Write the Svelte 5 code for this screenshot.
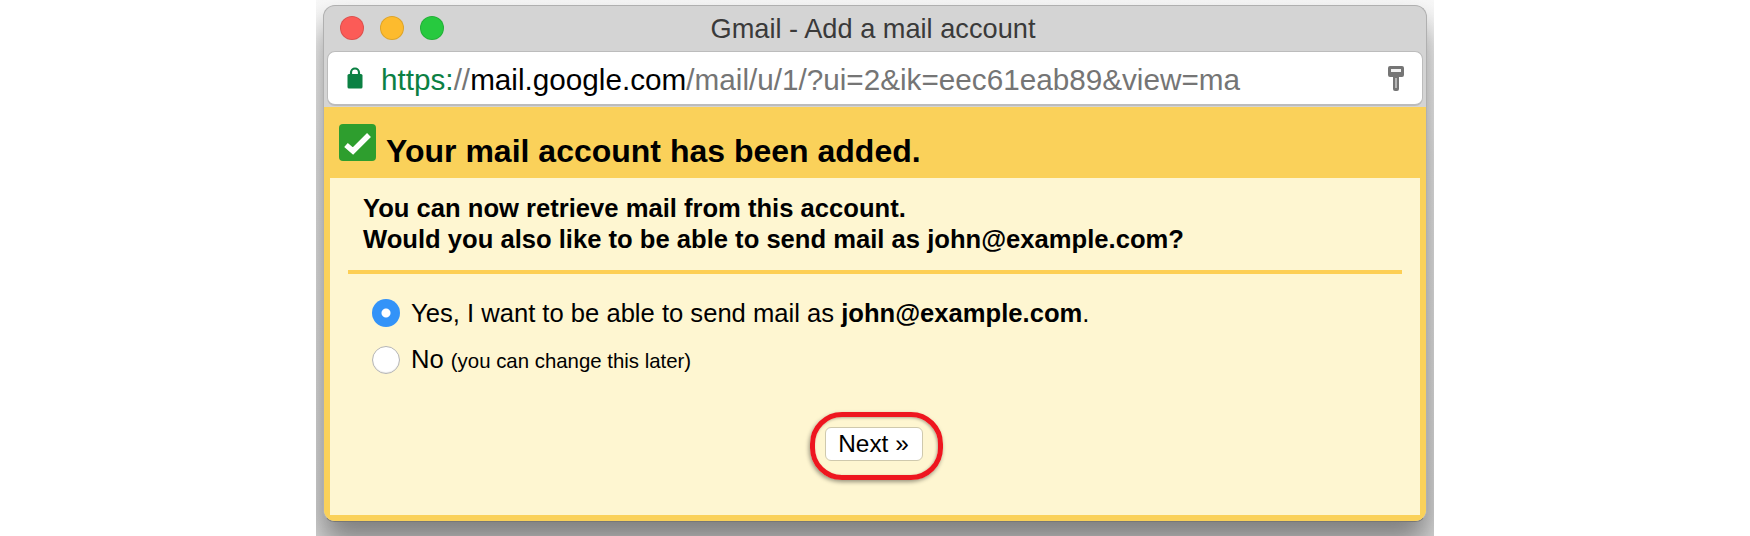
<script>
  let sendAs = $state("yes");
</script>

<div class="stage">
  <div class="window">
    <div class="titlebar">
      <div class="lights">
        <span class="light red"></span>
        <span class="light amber"></span>
        <span class="light green"></span>
      </div>
      <div class="title">Gmail - Add a mail account</div>
    </div>

    <div class="addressbar">
      <svg class="lock" width="16" height="22" viewBox="0 0 16 22">
        <path d="M4 9V5.5a4 4 0 0 1 8 0V9" fill="none" stroke="#0b8043" stroke-width="2.2" />
        <rect x="0.5" y="7" width="15" height="14.5" rx="1.5" fill="#0b8043" />
      </svg>
      <div class="url">
        <span class="scheme">https:</span><span class="path">//</span><span class="host">mail.google.com</span><span class="path">/mail/u/1/?ui=2&amp;ik=eec61eab89&amp;view=ma</span>
      </div>
      <svg class="key" width="16" height="25" viewBox="0 0 16 25">
        <path d="M2 0h12a2 2 0 0 1 2 2v7a2 2 0 0 1-2 2h-3v12a2 2 0 0 1-2 2H7a2 2 0 0 1-2-2V11H2a2 2 0 0 1-2-2V2a2 2 0 0 1 2-2z" fill="#757575" />
        <rect x="3" y="3" width="10" height="3" fill="#f2f2f2" />
        <rect x="7" y="12" width="2" height="10" fill="#b5b5b5" />
      </svg>
    </div>

    <div class="panel">
      <div class="panel-head">
        <svg class="check" width="37" height="37" viewBox="0 0 37 37">
          <rect width="37" height="37" rx="4" fill="#2e9e2e" />
          <path d="M7 21l7 6L30 11" fill="none" stroke="#fff" stroke-width="5.5" />
        </svg>
        <h1>Your mail account has been added.</h1>
      </div>

      <div class="panel-body">
        <p class="lead">
          You can now retrieve mail from this account.<br />
          Would you also like to be able to send mail as john@example.com?
        </p>
        <hr />

        <div class="options">
          <label class="option">
            <input type="radio" name="send" value="yes" bind:group={sendAs} />
            <span>Yes, I want to be able to send mail as <b>john@example.com</b>.</span>
          </label>
          <label class="option">
            <input type="radio" name="send" value="no" bind:group={sendAs} />
            <span>No <small>(you can change this later)</small></span>
          </label>
        </div>

        <div class="actions">
          <div class="ring-wrap">
            <button type="button" class="next">Next »</button>
            <span class="ring"></span>
          </div>
        </div>
      </div>
    </div>
  </div>
</div>

<style>
  :global(body) {
    margin: 0;
    background: #fff;
  }

  .stage {
    box-sizing: border-box;
    width: 1118px;
    height: 536px;
    margin: 0 auto;
    padding: 5px 7px 0;
    overflow: hidden;
    background: linear-gradient(#f8f8f8, #e6e6e6 30%, #d8d8d8);
    font-family: "Liberation Sans", Arial, sans-serif;
    color: #000;
  }

  .window {
    height: 517px;
    display: flex;
    flex-direction: column;
    box-sizing: border-box;
    border: 1px solid #b0b0b0;
    border-bottom-color: #777;
    border-radius: 12px;
    background: #d4d4d4;
    box-shadow: 0 20px 30px rgba(0, 0, 0, 0.42);
    overflow: hidden;
  }

  .titlebar {
    flex: none;
    height: 45px;
    display: flex;
    align-items: center;
    justify-content: center;
    position: relative;
  }

  .lights {
    position: absolute;
    left: 16px;
    top: 10px;
    display: flex;
    gap: 16px;
  }

  .light {
    width: 22px;
    height: 22px;
    border-radius: 50%;
    border: 1px solid rgba(0, 0, 0, 0.12);
  }

  .red {
    background: #fc5b57;
  }

  .amber {
    background: #fdbb2e;
  }

  .green {
    background: #27c93f;
  }

  .title {
    font-size: 27.2px;
    color: #3a3a3a;
    margin-top: 1px;
    margin-right: 4px;
  }

  .addressbar {
    flex: none;
    box-sizing: border-box;
    height: 55px;
    margin: 0 3px;
    padding: 0 11px 0 19px;
    display: flex;
    align-items: center;
    background: #fff;
    border: 1px solid #bcbcbc;
    border-bottom-width: 2px;
    border-radius: 8px;
  }

  .lock {
    flex: none;
    margin-right: 18px;
  }

  .url {
    flex: 1;
    font-size: 29.7px;
    white-space: nowrap;
    overflow: hidden;
    padding-top: 3px;
  }

  .scheme {
    color: #0b8043;
  }

  .host {
    color: #000;
  }

  .path {
    color: #757575;
  }

  .key {
    flex: none;
    margin-right: 7px;
  }

  .panel {
    flex: 1;
    min-height: 0;
    display: flex;
    flex-direction: column;
    margin-top: 1px;
    background: #fad15a;
  }

  .panel-head {
    flex: none;
    height: 71px;
    box-sizing: border-box;
    padding: 17px 0 0 15px;
    display: flex;
    align-items: flex-start;
  }

  .check {
    flex: none;
  }

  h1 {
    margin: 9px 0 0 10px;
    font-size: 32px;
    line-height: 36px;
    font-weight: 700;
  }

  .panel-body {
    flex: 1;
    margin: 0 6px 6px;
    padding: 15px 18px 0;
    background: #fef6d1;
  }

  .lead {
    margin: 0;
    padding-left: 15px;
    font-size: 25.6px;
    line-height: 31px;
    font-weight: 700;
  }

  hr {
    height: 4px;
    margin: 15px 0 0;
    border: 0;
    background: #fdcf55;
  }

  .options {
    margin-top: 25px;
    padding-left: 24px;
    display: flex;
    flex-direction: column;
    gap: 18px;
  }

  .option {
    display: flex;
    align-items: center;
    gap: 11px;
    font-size: 25.6px;
    line-height: 28px;
  }

  small {
    font-size: 20.4px;
  }

  input[type="radio"] {
    appearance: none;
    flex: none;
    width: 28px;
    height: 28px;
    margin: 0;
    border-radius: 50%;
    border: 1px solid #b5b5b5;
    background: #fff;
    box-shadow: inset 0 -1px 1px rgba(0, 0, 0, 0.08);
  }

  input[type="radio"]:checked {
    border: 0;
    background: radial-gradient(circle, #fff 0 4px, #3393f8 5px);
    box-shadow: none;
  }

  .actions {
    display: flex;
    justify-content: center;
    margin-top: 52px;
  }

  .ring-wrap {
    position: relative;
    margin-right: 3px;
  }

  .next {
    display: block;
    width: 98px;
    height: 34px;
    padding: 0;
    background: #fff;
    border: 1px solid #cfc9ad;
    border-radius: 6px;
    font-family: inherit;
    font-size: 24.4px;
    color: #000;
  }

  .ring {
    position: absolute;
    inset: -15px -20px -19px -15px;
    border: 5px solid #ee161f;
    border-radius: 32px;
    box-shadow: -1px 2px 4px rgba(0, 0, 0, 0.4), inset -1px 1px 3px rgba(0, 0, 0, 0.3);
    pointer-events: none;
  }
</style>
